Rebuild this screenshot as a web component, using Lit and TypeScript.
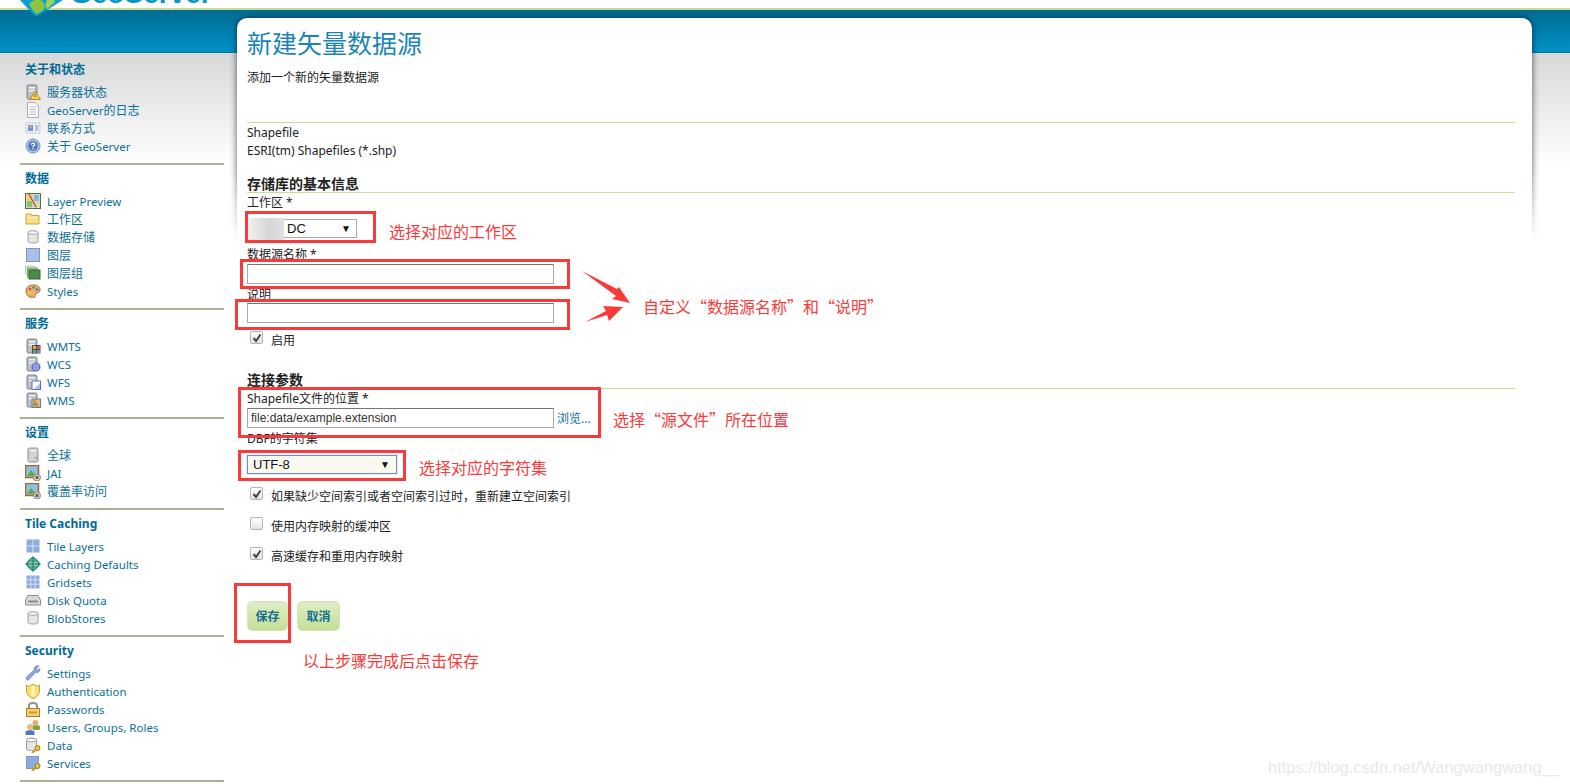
import { LitElement, html, css, svg } from "lit";
import { customElement } from "lit/decorators.js";

const srv = svg`<rect x="2" y="1" width="10" height="14" rx="1.5" fill="#b9bec4" stroke="#7d8388"/><rect x="4" y="3" width="6" height="1.5" fill="#eef0f2"/><rect x="4" y="6" width="6" height="1.5" fill="#eef0f2"/>`;
const cyl = svg`<path d="M3 3.5C3 1.5 13 1.5 13 3.5V12.5C13 14.5 3 14.5 3 12.5Z" fill="#e6e6e6" stroke="#a0a0a0"/><ellipse cx="8" cy="3.5" rx="5" ry="1.8" fill="#f8f8f8" stroke="#a8a8a8"/>`;
const key = svg`<circle cx="12.5" cy="11" r="2.5" fill="#f0c040" stroke="#a87a10"/><path d="M11 12.5L7 16" stroke="#c89820" stroke-width="2"/>`;
const icons: Record<string, unknown> = {
  status: svg`${srv}<path d="M10 7L15.5 15.5H5Z" fill="#f7d348" stroke="#b5862a"/><rect x="9.6" y="10" width="1" height="3" fill="#553"/>`,
  log: svg`<path d="M2.5.5H10L13.5 4V15.5H2.5Z" fill="#fff" stroke="#aab"/><path d="M4.5 5H11M4.5 7.5H11M4.5 10H11M4.5 12.5H11" stroke="#b8b8c0"/>`,
  contact: svg`<rect x="1" y="3" width="14" height="10" fill="#eef2fa" stroke="#b4bccc" stroke-dasharray="2 1"/><rect x="3" y="5" width="5" height="6" fill="#6f93d2"/><circle cx="5.5" cy="7" r="1.4" fill="#e8a05a"/><path d="M10 6H13.5M10 8H13.5M10 10H13.5" stroke="#8a94a8"/>`,
  about: svg`<circle cx="8" cy="8" r="7" fill="#a9bfe6" stroke="#7f97c4"/><circle cx="8" cy="8" r="4.8" fill="#4f78bd"/><path d="M6.4 6.6C6.6 4.6 9.8 4.8 9.7 6.6 9.6 7.8 8 7.8 8 9.2" fill="none" stroke="#fff" stroke-width="1.3"/><rect x="7.4" y="10" width="1.3" height="1.3" fill="#fff"/>`,
  preview: svg`<rect x=".5" y=".5" width="15" height="15" fill="#cfe0b0" stroke="#5a6a55"/><rect x="9" y="2" width="5" height="6" fill="#8fb4de"/><rect x="2" y="8" width="5" height="6" fill="#8dc06a"/><rect x="2" y="2" width="5" height="5" fill="#f0d070"/><path d="M4 1L11 14" stroke="#c8402a" stroke-width="1.3"/>`,
  folder: svg`<path d="M1 3H6L7 4.5H14V13H1Z" fill="#f8e08a" stroke="#d0a040"/><rect x="2.5" y="6" width="10" height="1" fill="#fff4c4"/>`,
  store: cyl,
  layer: svg`<rect x="1.5" y="1.5" width="13" height="13" fill="#a9c0e8" stroke="#7f97c8"/>`,
  group: svg`<rect x=".5" y="1" width="9" height="8" fill="#e4f0de" stroke="#b8d0b0"/><rect x="2.5" y="3" width="10" height="9" fill="#9cc490" stroke="#80a878"/><rect x="4" y="5" width="11" height="9" fill="#4d8a4c" stroke="#33663a"/>`,
  styles: svg`<path d="M1 8C1 3 6 1.5 10 2 14 2.5 15.5 5.5 15 8 14.5 10 12 9.5 11 10.5 10 12 11.5 14.5 7.5 14.5 4 14.5 1 12 1 8Z" fill="#e8b070" stroke="#a87038"/><circle cx="5" cy="6" r="1.3" fill="#d84030"/><circle cx="8.5" cy="4.5" r="1.3" fill="#40a040"/><circle cx="12" cy="6.5" r="1.3" fill="#4070d0"/><circle cx="4.5" cy="10" r="1.3" fill="#e8d040"/>`,
  wmts: svg`${srv}<rect x="7" y="7" width="8.5" height="8.5" fill="#4a4f68"/><rect x="8" y="8" width="3" height="3" fill="#d8b050"/><rect x="12" y="8" width="3" height="3" fill="#c86040"/><rect x="8" y="12" width="3" height="3" fill="#70a860"/><rect x="12" y="12" width="3" height="3" fill="#7090c8"/>`,
  wcs: svg`${srv}<circle cx="11" cy="11" r="4.5" fill="#5a6ec8"/><path d="M8 9h6M8 11h6M8 13h6M9 8v6M11 7v8M13 8v6" stroke="#b8c4ee" stroke-width=".7"/>`,
  wfs: svg`${srv}<rect x="7" y="7" width="8.5" height="8.5" fill="#fff" stroke="#5a6ec8"/><path d="M15 9V15H9Z" fill="#a9c0e8"/>`,
  wms: svg`${srv}<rect x="7" y="7" width="8.5" height="8.5" fill="#d8c060" stroke="#7070c0"/><path d="M9 8L13 15" stroke="#c85030"/><rect x="8" y="11" width="3" height="3" fill="#70a860"/>`,
  global: svg`<rect x="3" y="1" width="10" height="14" rx="1.5" fill="#d0d4d0" stroke="#8a908a"/><rect x="5" y="3" width="6" height="1.5" fill="#f0f2f0"/><rect x="10" y="10" width="1.5" height="1.5" fill="#60a860"/>`,
  jai: svg`<rect x=".5" y=".5" width="13" height="12" fill="#8fc0e0" stroke="#9a6a30" stroke-width="1.5"/><path d="M2 11L6 5L11 11Z" fill="#60a848"/><circle cx="12" cy="12.5" r="3.5" fill="#d8d4cc" stroke="#888"/><rect x="10.5" y="11" width="3" height="3" fill="#8a5a30"/>`,
  tiles: svg`<rect x="1.5" y="1.5" width="13" height="13" fill="#8eabdf"/><path d="M8 1.5V14.5M1.5 8H14.5" stroke="#d6e2f6"/>`,
  globe: svg`<path d="M8 0L16 8 8 16 0 8Z" fill="#18a090"/><circle cx="8" cy="8" r="5.5" fill="#8fd0b8" stroke="#187860"/><path d="M2.5 8H13.5M8 2.5V13.5M4 5H12M4 11H12" stroke="#187860"/>`,
  grid: svg`<rect x="1.5" y="1.5" width="13" height="13" fill="#8eabdf"/><path d="M5.8 1.5V14.5M10.2 1.5V14.5M1.5 5.8H14.5M1.5 10.2H14.5" stroke="#d6e2f6"/>`,
  disk: svg`<path d="M3 3.5H13L15.5 8V13H.5V8Z" fill="#d8d8d8" stroke="#8a8a8a"/><rect x="3" y="8.5" width="10" height="2" fill="#8a8a8a"/>`,
  wrench: svg`<path d="M1.5 14.5C.5 13.5 1 12.5 2 11.5L9 5C8.5 2.5 11 0 14 1L11.5 3.5 12.5 5 15 3.5C15.5 6.5 13 8.5 10.5 7.5L4 14.5C3.5 15.5 2.5 15.5 1.5 14.5Z" fill="#8aa4dc" stroke="#6a80b0" stroke-width=".6"/>`,
  shield: svg`<path d="M1.5 2L4 3.5 8 1 12 3.5 14.5 2V8C14.5 12 11 14.5 8 15.5 5 14.5 1.5 12 1.5 8Z" fill="#f8e078" stroke="#c8a030"/><path d="M8 3V13.5" stroke="#fff4b8" stroke-width="3"/>`,
  lock: svg`<path d="M4 8V5C4 1 12 1 12 5V8" fill="none" stroke="#909090" stroke-width="2"/><rect x="1.5" y="7.5" width="13" height="8" fill="#f5d070" stroke="#b87c20"/><rect x="4" y="10.5" width="8" height="2" fill="#c89838"/>`,
  users: svg`<circle cx="10.5" cy="4" r="3" fill="#e8b070"/><rect x="7.5" y="6.5" width="7.5" height="4.5" rx="1" fill="#78a848"/><circle cx="5" cy="8" r="3" fill="#f0b880"/><path d="M.5 16V13C.5 10.5 9.5 10.5 9.5 13V16Z" fill="#4878c8"/>`,
  data: svg`<path d="M1.5 3C1.5 .5 11.5 .5 11.5 3V12C11.5 14 1.5 14 1.5 12Z" fill="#e6e6e6" stroke="#a0a0a0"/><ellipse cx="6.5" cy="3" rx="5" ry="1.8" fill="#f8f8f8" stroke="#a8a8a8"/>${key}`,
  services: svg`<rect x="1.5" y="1.5" width="12" height="12" fill="#8eabdf" stroke="#7f97c8"/>${key}`,
};

interface Item { i: string; t: string }
interface Sec { h: string; latin?: boolean; items: Item[] }
const sections: Sec[] = [
  { h: "关于和状态", items: [
    { i: "status", t: "服务器状态" }, { i: "log", t: "GeoServer的日志" }, { i: "contact", t: "联系方式" }, { i: "about", t: "关于 GeoServer" } ] },
  { h: "数据", items: [
    { i: "preview", t: "Layer Preview" }, { i: "folder", t: "工作区" }, { i: "store", t: "数据存储" }, { i: "layer", t: "图层" }, { i: "group", t: "图层组" }, { i: "styles", t: "Styles" } ] },
  { h: "服务", items: [
    { i: "wmts", t: "WMTS" }, { i: "wcs", t: "WCS" }, { i: "wfs", t: "WFS" }, { i: "wms", t: "WMS" } ] },
  { h: "设置", items: [
    { i: "global", t: "全球" }, { i: "jai", t: "JAI" }, { i: "jai", t: "覆盖率访问" } ] },
  { h: "Tile Caching", latin: true, items: [
    { i: "tiles", t: "Tile Layers" }, { i: "globe", t: "Caching Defaults" }, { i: "grid", t: "Gridsets" }, { i: "disk", t: "Disk Quota" }, { i: "store", t: "BlobStores" } ] },
  { h: "Security", latin: true, items: [
    { i: "wrench", t: "Settings" }, { i: "shield", t: "Authentication" }, { i: "lock", t: "Passwords" }, { i: "users", t: "Users, Groups, Roles" }, { i: "data", t: "Data" }, { i: "services", t: "Services" } ] },
];

const notes = [
  { c: "n1", t: "选择对应的工作区" },
  { c: "n2", t: "自定义“数据源名称”和“说明”" },
  { c: "n3", t: "选择“源文件”所在位置" },
  { c: "n4", t: "选择对应的字符集" },
  { c: "n5", t: "以上步骤完成后点击保存" },
];
const boxes = ["b1", "b2", "b3", "b4", "b5", "b6"];

@customElement("app-root")
export class AppRoot extends LitElement {
  static styles = css`
    :host { display: block; width: 1570px; height: 784px; overflow: hidden; position: relative; background: #fff;
      font-family: "Noto Sans", "Noto Sans CJK SC", sans-serif; font-size: 12px; color: #222; }
    .top { height: 8px; background: #fff; position: relative; z-index: 1; }
    .logo { position: absolute; left: 17px; top: -18px; }
    .logotext { position: absolute; left: 70px; top: -20px; font: bold 28px/28px "Liberation Sans", sans-serif; color: #0a96cc; }
    .rule { height: 2px; background: #c5dd95; }
    .band { height: 42px; background: linear-gradient(#006c92, #0091c6); border-bottom: 1px solid #007aa5; }
    .main { display: flex; align-items: flex-start; background: linear-gradient(#d8d8d8, #fff 112px) no-repeat; height: 731px; }
    .side { width: 204px; margin-left: 20px; flex: none; padding-top: 8px; }
    .sec { border-bottom: 2px solid #a9b295; padding: 0 0 8px 5px; margin-bottom: 5px; }
    .sec h3 { margin: 0 0 6px; font-size: 12px; height: 16px; line-height: 18px; font-weight: 600; color: #006b94; }
    .sec.latin h3 { font-weight: 700; font-size: 12px; }
    .item { display: flex; align-items: center; height: 18px; color: #0b6f98; white-space: nowrap; }
    .item svg { width: 16px; height: 16px; flex: none; margin-right: 6px; }
    .lat { font-size: 11.5px; }
    .card { position: relative; margin: -35px 0 0 13px; width: 1295px; height: 222px; flex: none; background: #fff; border-radius: 10px 10px 0 0;
      box-shadow: 0 0 7px rgba(0,20,40,.7); }
    .cardfade { position: absolute; left: -14px; right: -14px; top: 150px; height: 90px; background: linear-gradient(rgba(255,255,255,0), #fff 82%); }
    .form { position: relative; margin-left: 10px; width: 1268px; }
    h1 { margin: 0; padding-top: 10px; font-size: 25px; line-height: 30px; font-weight: 400; color: #1a84b4; }
    .desc { margin: 11px 0 0; height: 16px; line-height: 18px; }
    .sep { border-bottom: 1px solid #c5dd95; height: 37px; }
    .line { height: 18px; line-height: 20px; }
    h4 { margin: 16px 0 0; font-size: 14px; line-height: 17px; font-weight: 700; color: #222; border-bottom: 1px solid #c5dd95; }
    h4.conn { margin-top: 22px; }
    label { display: block; line-height: 18px; height: 16px; margin-top: 2px; }
    label.tight { margin-top: 1px; }
    label.wide { margin-top: 8px; }
    .sel { display: flex; align-items: center; justify-content: space-between; box-sizing: border-box; height: 19px; width: 110px; margin-top: 9px;
      border: 1px solid #a9a9a9; font: 13px/16px "Liberation Sans", sans-serif; color: #111; padding: 0 5px 0 39px; background: #fff; position: relative; }
    .tri { font-size: 10px; }
    .blur { position: absolute; left: -2px; top: -2px; width: 38px; height: 22px; background: linear-gradient(90deg, #f4f4f4, #d6d6d6 60%, #e0e0e0); }
    .field { box-sizing: border-box; width: 307px; height: 20px; margin-top: 2px; border: 1px solid #a9a9a9; border-top-color: #767676; background: #fff; }
    .field.close { margin-top: 1px; }
    .row { display: flex; align-items: center; gap: 3px; margin-top: 2px; }
    .row .field { margin-top: 0; }
    .fileinput { font: 12px/18px "Liberation Sans", sans-serif; color: #333; padding-left: 3px; }
    .browse { color: #0b6f98; }
    .chk { display: flex; align-items: center; margin: 10px 0 0 3px; height: 20px; }
    .chk.en { margin-top: 6px; }
    .chk.first { margin-top: 11px; }
    .chk .txt { margin-top: 2px; }
    .box { box-sizing: border-box; width: 13px; height: 13px; border: 1px solid #b4b4b4; border-radius: 2px; background: linear-gradient(#fff, #e4e4e4); margin: -3px 8px 0 0; display: flex; align-items: center; justify-content: center; }
    .box svg { width: 10px; height: 10px; }
    .utf { width: 150px; height: 19px; padding: 0 6px 0 5px; background: #fafaf0; border: 1px solid #6d8fd0; box-shadow: 0 0 1px #6d8fd0; }
    .btns { display: flex; gap: 9px; margin-top: 36px; }
    .btn { width: 41px; height: 30px; display: flex; align-items: center; justify-content: center; border: 1px solid #d5e6b4; border-radius: 5px; box-sizing: border-box;
      background: linear-gradient(#dfeec6, #c4de96); color: #11708f; font-weight: 700; }
    .btn + .btn { width: 43px; }
    .ann { position: absolute; left: 0; top: 0; width: 100%; height: 100%; pointer-events: none; z-index: 2; }
    .b { position: absolute; box-sizing: border-box; border: 3px solid #f93a3a; }
    .b1 { left: 245px; top: 211px; width: 131px; height: 32px; }
    .b2 { left: 240px; top: 259px; width: 330px; height: 30px; }
    .b3 { left: 235px; top: 299px; width: 335px; height: 31px; }
    .b4 { left: 238px; top: 387px; width: 363px; height: 51px; }
    .b5 { left: 238px; top: 450px; width: 168px; height: 31px; }
    .b6 { left: 234px; top: 583px; width: 57px; height: 60px; }
    .n { position: absolute; color: #f93a3a; font-family: "Noto Sans CJK SC", sans-serif; font-size: 16px; line-height: 20px; white-space: nowrap; }
    .n1 { left: 389px; top: 221px; }
    .n2 { left: 643px; top: 296px; }
    .n3 { left: 613px; top: 409px; }
    .n4 { left: 419px; top: 457px; }
    .n5 { left: 303px; top: 650px; }
    .arrows { position: absolute; left: 580px; top: 268px; }
    .wm { position: absolute; right: 10px; bottom: 7px; font: 16.5px/20px "Liberation Sans", sans-serif; color: #e8e8e8; }
  `;

  private label(t: string) {
    return t.split(/([\x00-\x7f]+)/).filter(Boolean).map(p =>
      /^[\x00-\x7f]/.test(p) ? html`<span class="lat">${p}</span>` : p);
  }

  private chk(on: boolean, t: string, cls = "") {
    return html`<div class="chk ${cls}"><span class="box">${on ? html`<svg viewBox="0 0 10 10"><path d="M1.5 5L4 8 8.5 1.5" fill="none" stroke="#444" stroke-width="2"/></svg>` : ""}</span><span class="txt">${t}</span></div>`;
  }

  render() {
    return html`
      <div class="top">
        <svg class="logo" width="46" height="35" viewBox="0 0 46 35">
          <path d="M1 16L28 0 46 18 22 33Q19 35 17 33Z" fill="#0b9dd6"/>
          <path d="M12 22Q20 14 26 20T20 32Q16 30 12 22Z" fill="#8cc63f"/>
          <path d="M30 18Q36 14 38 20L30 27Q27 24 30 18Z" fill="#9fd255"/>
        </svg>
        <div class="logotext">GeoServer</div>
      </div>
      <div class="rule"></div>
      <div class="band"></div>
      <div class="main">
        <nav class="side">
          ${sections.map(s => html`<section class="sec ${s.latin ? "latin" : ""}"><h3>${s.h}</h3>
            ${s.items.map(it => html`<div class="item"><svg viewBox="0 0 16 16">${icons[it.i]}</svg><span>${this.label(it.t)}</span></div>`)}</section>`)}
        </nav>
        <div class="card">
          <div class="cardfade"></div>
          <div class="form">
            <h1>新建矢量数据源</h1>
            <div class="desc">添加一个新的矢量数据源</div>
            <div class="sep"></div>
            <div class="line">Shapefile</div>
            <div class="line">ESRI(tm) Shapefiles (*.shp)</div>
            <h4>存储库的基本信息</h4>
            <label class="tight">工作区 *</label>
            <div class="sel"><span class="blur"></span><span>DC</span><span class="tri">▼</span></div>
            <label class="wide">数据源名称 *</label>
            <div class="field"></div>
            <label>说明</label>
            <div class="field close"></div>
            ${this.chk(true, "启用", "en")}
            <h4 class="conn">连接参数</h4>
            <label class="tight">Shapefile文件的位置 *</label>
            <div class="row"><div class="field fileinput">file:data/example.extension</div><span class="browse">浏览...</span></div>
            <label>DBF的字符集</label>
            <div class="sel utf"><span>UTF-8</span><span class="tri">▼</span></div>
            ${this.chk(true, "如果缺少空间索引或者空间索引过时，重新建立空间索引", "first")}
            ${this.chk(false, "使用内存映射的缓冲区")}
            ${this.chk(true, "高速缓存和重用内存映射")}
            <div class="btns"><div class="btn">保存</div><div class="btn">取消</div></div>
          </div>
        </div>
      </div>
      <div class="ann">
        ${boxes.map(b => html`<div class="b ${b}"></div>`)}
        ${notes.map(n => html`<div class="n ${n.c}">${n.t}</div>`)}
        <svg class="arrows" width="52" height="60" viewBox="0 0 52 60"><path d="M2 3L37 21 39 19 50 35 32 31 36 28Z" fill="#f93a3a"/><path d="M5 54L27 47 29 53 43 39 23 38 26 43Z" fill="#f93a3a"/></svg>
        <div class="wm">https://blog.csdn.net/Wangwangwang__</div>
      </div>
    `;
  }
}
